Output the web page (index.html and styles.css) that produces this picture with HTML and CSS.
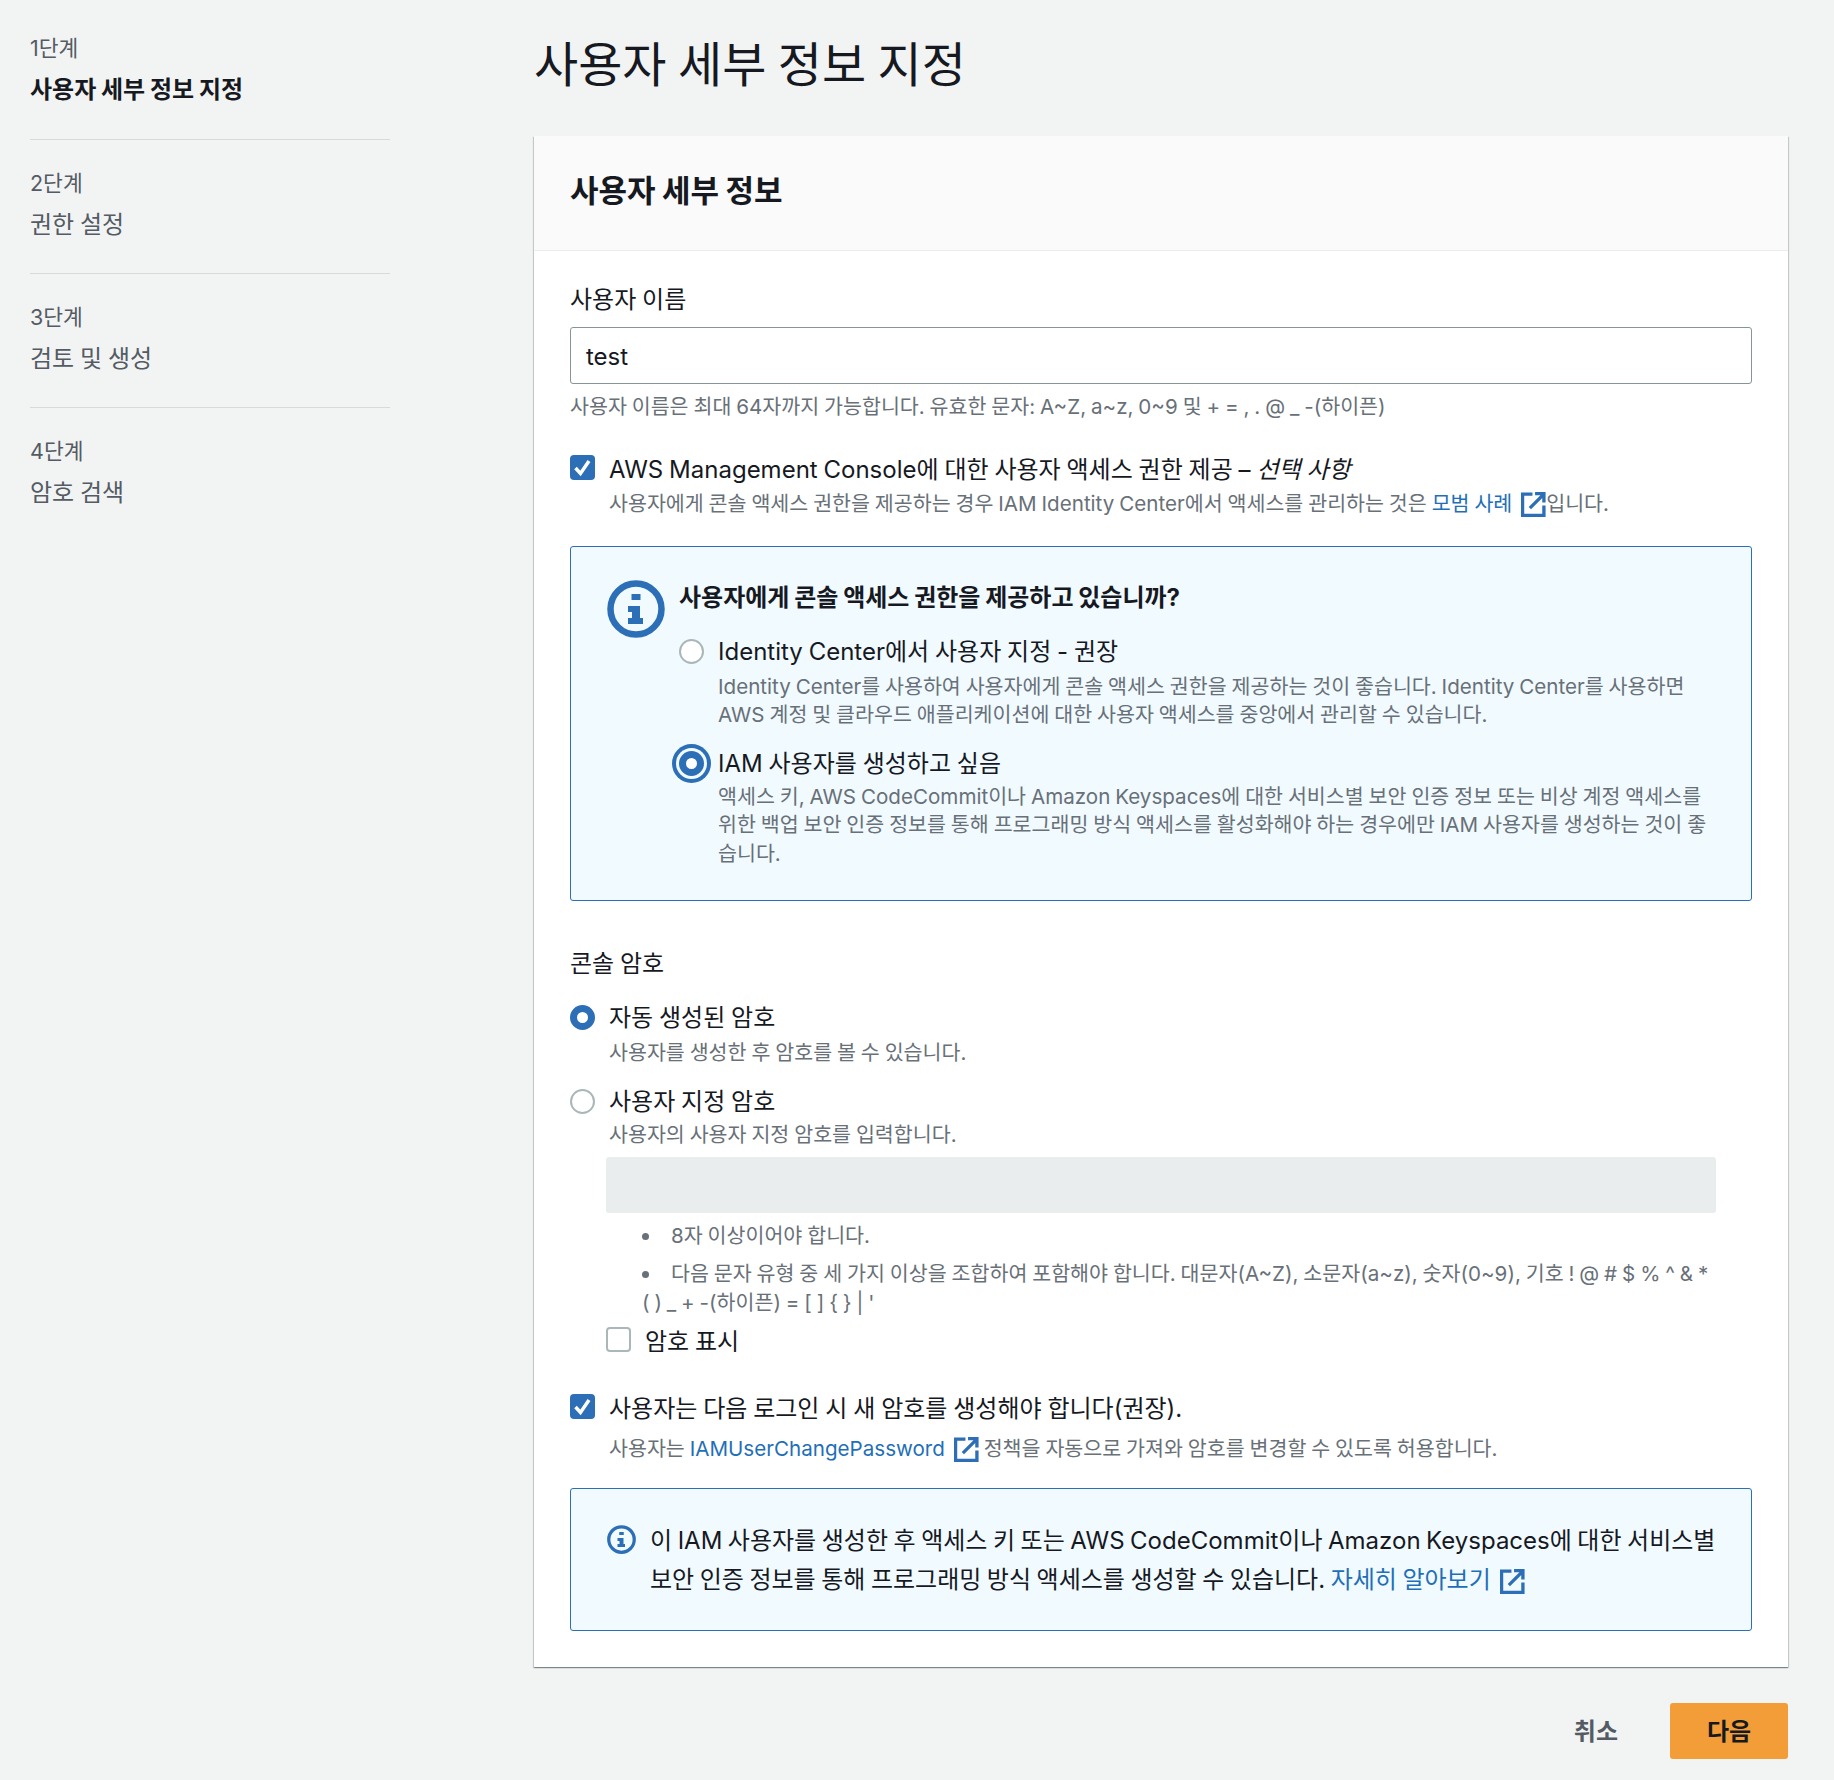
FILE: index.html
```html
<!DOCTYPE html>
<html lang="ko">
<head>
<meta charset="utf-8">
<title>사용자 세부 정보 지정</title>
<link rel="stylesheet" href="styles.css">
</head>
<body>
<svg class="defs" width="0" height="0" aria-hidden="true">
  <symbol id="ext" viewBox="0 0 24 24"><path d="M11 2H1.500v20.500h20.500V13M8.500 15.500 21 3M13.500 1.500h8.500v8.500" fill="none" stroke="currentColor" stroke-width="3.200"/></symbol>
  <symbol id="info" viewBox="0 0 58 58"><circle cx="29" cy="29" r="25.500" fill="none" stroke="currentColor" stroke-width="6.500"/><path d="M24.500 14h9v6h-9zM21 26h12v12h3v6H21v-6h4v-6h-4z" fill="currentColor"/></symbol>
  <symbol id="check" viewBox="0 0 25 25"><path d="M5.500 13l5 5.500L19 6" fill="none" stroke="#fff" stroke-width="3.500"/></symbol>
</svg>
<div class="page">
  <nav class="steps">
    <div class="step"><div class="step-no">1단계</div><div class="step-name current">사용자 세부 정보 지정</div></div>
    <div class="step"><div class="step-no">2단계</div><div class="step-name">권한 설정</div></div>
    <div class="step"><div class="step-no">3단계</div><div class="step-name">검토 및 생성</div></div>
    <div class="step last"><div class="step-no">4단계</div><div class="step-name">암호 검색</div></div>
  </nav>
  <main class="main">
    <h1 class="title">사용자 세부 정보 지정</h1>
    <section class="card">
      <header class="card-head"><h2 class="card-title">사용자 세부 정보</h2></header>
      <div class="card-body">
        <div class="field-label">사용자 이름</div>
        <div class="input">test</div>
        <p class="hint">사용자 이름은 최대 64자까지 가능합니다. 유효한 문자: A~Z, a~z, 0~9 및 + = , . @ _ -(하이픈)</p>

        <div class="opt console-opt">
          <span class="box on"><svg class="tick"><use href="#check"/></svg></span>
          <div>
            <div class="opt-label">AWS Management Console에 대한 사용자 액세스 권한 제공 – <i>선택 사항</i></div>
            <div class="desc">사용자에게 콘솔 액세스 권한을 제공하는 경우 IAM Identity Center에서 액세스를 관리하는 것은 <a class="link">모범 사례 <svg class="ext"><use href="#ext"/></svg></a>입니다.</div>
          </div>
        </div>

        <div class="alert big">
          <svg class="info-big"><use href="#info"/></svg>
          <div class="alert-main">
            <div class="alert-title">사용자에게 콘솔 액세스 권한을 제공하고 있습니까?</div>
            <div class="opt choice first">
              <span class="radio"></span>
              <div>
                <div class="opt-label">Identity Center에서 사용자 지정 - 권장</div>
                <div class="desc">Identity Center를 사용하여 사용자에게 콘솔 액세스 권한을 제공하는 것이 좋습니다. Identity Center를 사용하면<br>AWS 계정 및 클라우드 애플리케이션에 대한 사용자 액세스를 중앙에서 관리할 수 있습니다.</div>
              </div>
            </div>
            <div class="opt choice second">
              <span class="radio sel focus"></span>
              <div>
                <div class="opt-label">IAM 사용자를 생성하고 싶음</div>
                <div class="desc">액세스 키, AWS CodeCommit이나 Amazon Keyspaces에 대한 서비스별 보안 인증 정보 또는 비상 계정 액세스를<br>위한 백업 보안 인증 정보를 통해 프로그래밍 방식 액세스를 활성화해야 하는 경우에만 IAM 사용자를 생성하는 것이 좋<br>습니다.</div>
              </div>
            </div>
          </div>
        </div>

        <div class="field-label pw-label">콘솔 암호</div>
        <div class="opt pw-auto">
          <span class="radio sel"></span>
          <div>
            <div class="opt-label">자동 생성된 암호</div>
            <div class="desc">사용자를 생성한 후 암호를 볼 수 있습니다.</div>
          </div>
        </div>
        <div class="opt pw-custom">
          <span class="radio"></span>
          <div>
            <div class="opt-label">사용자 지정 암호</div>
            <div class="desc">사용자의 사용자 지정 암호를 입력합니다.</div>
          </div>
        </div>
        <div class="pw-block">
          <div class="input-disabled"></div>
          <ul class="rules">
            <li>8자 이상이어야 합니다.</li>
            <li>다음 문자 유형 중 세 가지 이상을 조합하여 포함해야 합니다. 대문자(A~Z), 소문자(a~z), 숫자(0~9), 기호 ! @ # $ % ^ &amp; *<br>( ) _ + -(하이픈) = [ ] { } | '</li>
          </ul>
          <div class="opt show-pw">
            <span class="box"></span>
            <div class="opt-label">암호 표시</div>
          </div>
        </div>
        <div class="opt reset">
          <span class="box on"><svg class="tick"><use href="#check"/></svg></span>
          <div>
            <div class="opt-label">사용자는 다음 로그인 시 새 암호를 생성해야 합니다(권장).</div>
            <div class="desc reset-desc">사용자는 <a class="link">IAMUserChangePassword <svg class="ext"><use href="#ext"/></svg></a> 정책을 자동으로 가져와 암호를 변경할 수 있도록 허용합니다.</div>
          </div>
        </div>
        <div class="alert small">
          <svg class="info-small"><use href="#info"/></svg>
          <div class="alert-text">이 IAM 사용자를 생성한 후 액세스 키 또는 AWS CodeCommit이나 Amazon Keyspaces에 대한 서비스별<br>보안 인증 정보를 통해 프로그래밍 방식 액세스를 생성할 수 있습니다. <a class="link">자세히 알아보기 <svg class="ext"><use href="#ext"/></svg></a></div>
        </div>
      </div>
    </section>
    <div class="actions">
      <button class="btn-cancel">취소</button>
      <button class="btn-next">다음</button>
    </div>
  </main>
</div>
</body>
</html>
```
FILE: styles.css
```css
* { box-sizing: border-box; }
html, body { margin: 0; padding: 0; }
body {
  background: #f2f3f3;
  color: #16191f;
  font-family: "Inter", "Noto Sans CJK KR", sans-serif;
  font-size: 20.600px;
  line-height: 29px;
  word-spacing: -0.900px;
  height: 1780px;
  overflow: hidden;
}
.defs { position: absolute; }
.page { display: flex; align-items: flex-start; }

.steps { width: 360px; margin: 33px 144px 0 30px; flex: none; }
.step { height: 107px; margin-bottom: 27px; border-bottom: 1px solid #d5dbdb; padding-top: 1px; }
.step + .step { padding-top: 2px; }
.step.last { border-bottom: 0; }
.step-no { color: #545b64; font-size: 21.500px; line-height: 29px; height: 29px; }
.step-name { color: #545b64; font-size: 24px; line-height: 33px; margin-top: 10px; }
.step-name.current { color: #16191f; font-weight: 700; }

.main { width: 1254px; flex: none; }
.title { font-size: 48px; line-height: 64px; font-weight: 400; margin: 33px 0 39px; word-spacing: -2px; }
.card { background: #fff; padding-bottom: 36px; box-shadow: 0 1px 1px 0 rgba(0,28,36,.3), 1px 1px 1px 0 rgba(0,28,36,.15), -1px 1px 1px 0 rgba(0,28,36,.15); }
.card-head { height: 115px; background: #fafafa; border-bottom: 1px solid #eaeded; padding: 35px 36px 0; }
.card-title { margin: 0; font-size: 31px; line-height: 40px; font-weight: 700; }
.card-body { padding: 32px 36px 0; }

.field-label { font-size: 24px; line-height: 33px; }
.input { margin-top: 11px; height: 57px; border: 1px solid #879596; border-radius: 3px; padding: 0 15px; font-size: 24px; line-height: 57px; }
.hint { margin: 8px 0 0; color: #687078; font-size: 20.600px; line-height: 29px; }

.opt { display: flex; }
.opt-label { font-size: 24px; line-height: 33px; color: #16191f; }
.desc { color: #687078; font-size: 20.600px; line-height: 28.600px; margin-top: 3px; white-space: nowrap; }
.link { color: #1f6fb8; }
.ext { width: 25px; height: 25px; margin-left: 4px; vertical-align: -6px; color: #2d6fb7; }

.box { flex: none; width: 25px; height: 25px; border: 2px solid #aab7b8; border-radius: 4px; margin: 2px 14px 0 0; background: #fff; display: block; }
.box.on { border: 0; background: #2d6fb7; }
.tick { display: block; width: 25px; height: 25px; }
.radio { flex: none; width: 25px; height: 25px; border: 2px solid #aab7b8; border-radius: 50%; margin: 4px 14px 0 0; background: #fff; }
.radio.sel { border: 7px solid #2d6fb7; }
.radio.focus { box-shadow: 0 0 0 3px #f1faff, 0 0 0 7px #2d6fb7; }

.console-opt { margin-top: 32px; }
.console-opt .desc { margin-top: 4px; }

.alert { background: #f1faff; border: 1px solid #2d6fb7; border-radius: 3px; }
.alert.big { height: 355px; margin-top: 27px; padding: 34px 36px 0; display: flex; }
.info-big { width: 58px; height: 58px; color: #2d6fb7; flex: none; margin-right: 14px; margin-top: -1px; }
.alert-main { flex: 1; }
.alert-title { font-size: 24px; line-height: 33px; font-weight: 700; }
.choice.first { margin-top: 21px; }
.choice.first .desc { margin-top: 5px; }
.choice.second { margin-top: 17px; }

.pw-label { margin-top: 46px; }
.pw-auto { margin-top: 21px; }
.pw-auto .desc { margin-top: 5px; }
.pw-custom { margin-top: 18px; }
.pw-block { padding: 7px 36px 0; }
.input-disabled { height: 56px; background: #eaeded; border-radius: 3px; }
.rules { margin: 9px 0 0; padding: 0 0 0 36px; color: #687078; font-size: 20.600px; line-height: 28.600px; list-style: none; }
.rules li { position: relative; margin-bottom: 10px; text-indent: 29px; white-space: nowrap; }
.rules li::before { content: ""; position: absolute; left: 0; top: 11px; width: 7px; height: 7px; border-radius: 50%; background: #687078; }
.show-pw { margin-top: -3px; }
.reset { margin-top: 34px; }
.reset-desc { margin-top: 10px; }

.alert.small { height: 143px; margin-top: 25px; padding: 32px 36px 0; display: flex; }
.info-small { width: 29px; height: 29px; color: #2d6fb7; flex: none; margin: 4px 14px 0 0; }
.alert-text { font-size: 24px; line-height: 39px; white-space: nowrap; word-spacing: -1.200px; }

.actions { display: flex; justify-content: flex-end; align-items: center; margin-top: 36px; }
.btn-cancel { background: none; border: 0; font: inherit; font-size: 24px; font-weight: 700; color: #545b64; margin-right: 32px; padding: 0 20px; }
.btn-next { width: 118px; height: 56px; background: #f29d38; border: 0; border-radius: 3px; font: inherit; font-size: 24px; font-weight: 700; color: #16191f; }
```
